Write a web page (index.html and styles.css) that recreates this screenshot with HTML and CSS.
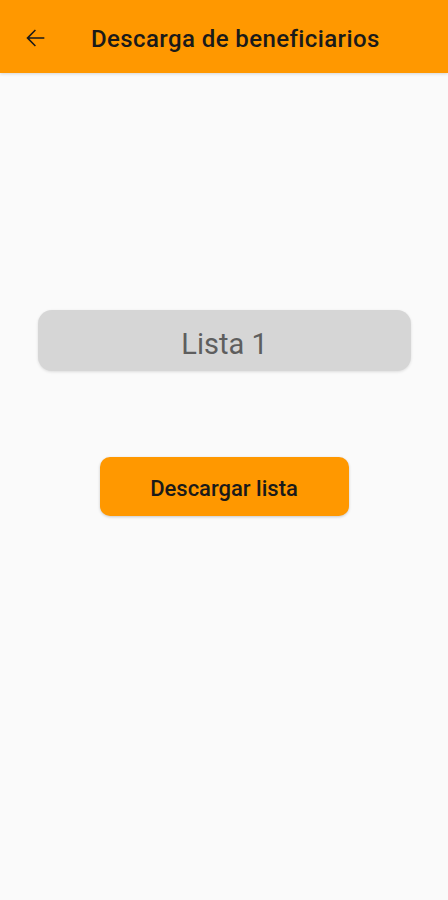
FILE: index.html
```html
<!DOCTYPE html>
<html lang="es">

<head>
  <meta charset="UTF-8" />
  <title>Descarga de beneficiarios</title>
  <link rel="stylesheet" href="styles.css">
</head>

<body>
  <div class="app">
    <!-- barra superior -->
    <div class="topbar">
      <span class="back">
        <svg width="28" height="28" viewBox="0 0 24 24">
          <path d="M20 11.25H7.2l5.6-5.6L11.9 4.7 4.6 12l7.3 7.3.9-.95-5.6-5.6H20v-1.5z" fill="#1a1a1a" />
        </svg>
      </span>
      <h1 class="title">Descarga de beneficiarios</h1>
    </div>

    <div class="content">
      <div class="list-field">Lista 1</div>
      <button class="btn-download">Descargar lista</button>
    </div>
  </div>
</body>

</html>
```

FILE: styles.css
```css
* {
  padding: 0;
  margin: 0;
  box-sizing: border-box;
}

body {
  background: #fafafa;
  font-family: Roboto, "Noto Sans", sans-serif;
}

.app {
  width: 448px;
  min-height: 900px;
}

.topbar {
  height: 73px;
  background: #ff9800;
  display: flex;
  align-items: center;
  padding-left: 21px;
  box-shadow: 0 1px 3px rgba(0, 0, 0, 0.15);
}

.back {
  width: 28px;
  height: 28px;
  display: flex;
  margin-top: 3px;
}

.title {
  margin-left: 42px;
  margin-top: 4px;
  font-size: 24px;
  font-weight: 500;
  color: #1a1a1a;
  letter-spacing: 0.4px;
}

.content {
  display: flex;
  flex-direction: column;
  align-items: center;
  padding-top: 237px;
}

.list-field {
  width: 373px;
  height: 61px;
  margin-left: 1px;
  background: #d6d6d6;
  border-radius: 14px;
  display: flex;
  align-items: center;
  justify-content: center;
  padding-top: 6px;
  font-size: 29px;
  color: #5e5e5e;
  box-shadow: 0 1px 3px rgba(0, 0, 0, 0.12);
}

.btn-download {
  margin-top: 86px;
  width: 249px;
  height: 59px;
  background: #ff9800;
  border: 0;
  border-radius: 10px;
  padding-top: 4px;
  font-family: Roboto, "Noto Sans", sans-serif;
  font-size: 22px;
  font-weight: 500;
  color: #1a1a1a;
  box-shadow: 0 1px 3px rgba(0, 0, 0, 0.2);
}
```
